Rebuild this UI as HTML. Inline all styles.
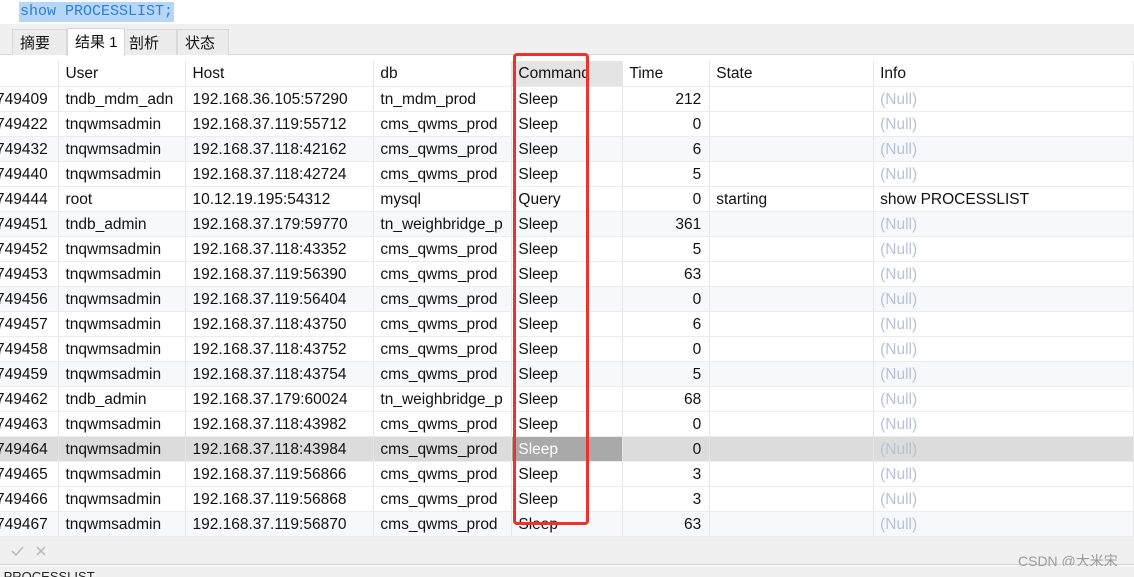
<!DOCTYPE html>
<html><head><meta charset="utf-8"><style>
*{margin:0;padding:0;box-sizing:border-box}
body{width:1134px;height:577px;overflow:hidden;background:#fff;font-family:"Liberation Sans","Noto Sans CJK SC",sans-serif;position:relative}
.sql{position:absolute;left:0;top:0;width:1134px;height:24px;background:#fff}
.sql span{position:absolute;left:19px;top:2px;height:20px;line-height:20px;background:#b6d6f5;color:#2b7fd4;font-family:"Liberation Mono",monospace;font-size:15px;padding:0 1px}
.gbar{position:absolute;left:0;top:24px;width:1134px;height:4px;background:#f0f0f0}
.tabs{position:absolute;left:0;top:28px;width:1134px;height:27px;background:#f0f0f0;border-bottom:1px solid #d8d8d8}
.tab{position:absolute;top:1px;height:26px;line-height:28px;font-size:15px;color:#111;border:1px solid #d8d8d8;border-bottom:none;background:#ececec;padding-left:7px}
.tab.act{background:#fff;top:0;height:28px}
table{position:absolute;left:0;top:61px;border-collapse:collapse;table-layout:fixed;font-size:15.5px;color:#111}
td{height:25px;border-right:1px solid #e6e6e6;border-bottom:1px solid #ececec;padding-left:6px;padding-top:2px;white-space:nowrap;overflow:hidden;line-height:22px}
tr.h td{background:#fff}
tr.o td{background:#f6f9fc}
tr.s td{background:#dcdcdc}
td.r{text-align:right;padding-right:8px}
td.n{color:#b8c2d6}
td.id{text-indent:-4px;padding-left:0}
.sel{background:#a9a9a9!important;color:#fff}
.bot{position:absolute;left:0;top:537px;width:1134px;height:28px;background:#f0f0f0;border-bottom:1px solid #cfcfcf}
.st{position:absolute;left:0;top:566px;width:1134px;height:11px;background:#f0f0f0;font-size:13px;line-height:22px;color:#222;overflow:hidden}
.redbox{position:absolute;left:513px;top:53px;width:76px;height:472px;border:3px solid #f0302a;border-radius:4px}
.wm{position:absolute;left:1018px;top:551px;font-size:14px;color:#9a9a9a}
</style></head><body>
<div class="sql"><span>show PROCESSLIST;</span></div>
<div class="gbar"></div>
<div class="tabs">
<div class="tab" style="left:12px;width:55px">摘要</div>
<div class="tab act" style="left:67px;width:58px">结果 1</div>
<div class="tab" style="left:124px;width:53px;padding-left:4px">剖析</div>
<div class="tab" style="left:177px;width:52px">状态</div>
</div>
<table>
<colgroup><col style="width:59px"><col style="width:127px"><col style="width:188px"><col style="width:138px"><col style="width:111px"><col style="width:87px"><col style="width:164px"><col style="width:260px"></colgroup>
<tr class="h"><td></td><td>User</td><td>Host</td><td>db</td><td style="background:#e4e4e4">Command</td><td>Time</td><td>State</td><td>Info</td></tr>
<tr><td class="id">749409</td><td>tndb_mdm_adn</td><td>192.168.36.105:57290</td><td>tn_mdm_prod</td><td>Sleep</td><td class="r">212</td><td></td><td class="n">(Null)</td></tr>
<tr><td class="id">749422</td><td>tnqwmsadmin</td><td>192.168.37.119:55712</td><td>cms_qwms_prod</td><td>Sleep</td><td class="r">0</td><td></td><td class="n">(Null)</td></tr>
<tr class="o"><td class="id">749432</td><td>tnqwmsadmin</td><td>192.168.37.118:42162</td><td>cms_qwms_prod</td><td>Sleep</td><td class="r">6</td><td></td><td class="n">(Null)</td></tr>
<tr><td class="id">749440</td><td>tnqwmsadmin</td><td>192.168.37.118:42724</td><td>cms_qwms_prod</td><td>Sleep</td><td class="r">5</td><td></td><td class="n">(Null)</td></tr>
<tr><td class="id">749444</td><td>root</td><td>10.12.19.195:54312</td><td>mysql</td><td>Query</td><td class="r">0</td><td>starting</td><td>show PROCESSLIST</td></tr>
<tr class="o"><td class="id">749451</td><td>tndb_admin</td><td>192.168.37.179:59770</td><td>tn_weighbridge_p</td><td>Sleep</td><td class="r">361</td><td></td><td class="n">(Null)</td></tr>
<tr><td class="id">749452</td><td>tnqwmsadmin</td><td>192.168.37.118:43352</td><td>cms_qwms_prod</td><td>Sleep</td><td class="r">5</td><td></td><td class="n">(Null)</td></tr>
<tr><td class="id">749453</td><td>tnqwmsadmin</td><td>192.168.37.119:56390</td><td>cms_qwms_prod</td><td>Sleep</td><td class="r">63</td><td></td><td class="n">(Null)</td></tr>
<tr class="o"><td class="id">749456</td><td>tnqwmsadmin</td><td>192.168.37.119:56404</td><td>cms_qwms_prod</td><td>Sleep</td><td class="r">0</td><td></td><td class="n">(Null)</td></tr>
<tr><td class="id">749457</td><td>tnqwmsadmin</td><td>192.168.37.118:43750</td><td>cms_qwms_prod</td><td>Sleep</td><td class="r">6</td><td></td><td class="n">(Null)</td></tr>
<tr><td class="id">749458</td><td>tnqwmsadmin</td><td>192.168.37.118:43752</td><td>cms_qwms_prod</td><td>Sleep</td><td class="r">0</td><td></td><td class="n">(Null)</td></tr>
<tr class="o"><td class="id">749459</td><td>tnqwmsadmin</td><td>192.168.37.118:43754</td><td>cms_qwms_prod</td><td>Sleep</td><td class="r">5</td><td></td><td class="n">(Null)</td></tr>
<tr><td class="id">749462</td><td>tndb_admin</td><td>192.168.37.179:60024</td><td>tn_weighbridge_p</td><td>Sleep</td><td class="r">68</td><td></td><td class="n">(Null)</td></tr>
<tr><td class="id">749463</td><td>tnqwmsadmin</td><td>192.168.37.118:43982</td><td>cms_qwms_prod</td><td>Sleep</td><td class="r">0</td><td></td><td class="n">(Null)</td></tr>
<tr class="s"><td class="id">749464</td><td>tnqwmsadmin</td><td>192.168.37.118:43984</td><td>cms_qwms_prod</td><td class="sel">Sleep</td><td class="r">0</td><td></td><td class="n">(Null)</td></tr>
<tr><td class="id">749465</td><td>tnqwmsadmin</td><td>192.168.37.119:56866</td><td>cms_qwms_prod</td><td>Sleep</td><td class="r">3</td><td></td><td class="n">(Null)</td></tr>
<tr><td class="id">749466</td><td>tnqwmsadmin</td><td>192.168.37.119:56868</td><td>cms_qwms_prod</td><td>Sleep</td><td class="r">3</td><td></td><td class="n">(Null)</td></tr>
<tr class="o"><td class="id">749467</td><td>tnqwmsadmin</td><td>192.168.37.119:56870</td><td>cms_qwms_prod</td><td>Sleep</td><td class="r">63</td><td></td><td class="n">(Null)</td></tr>
</table>
<div class="redbox"></div>
<div class="bot">
<svg style="position:absolute;left:10px;top:8px" width="36" height="12"><path d="M2 6l4 4 7-8" stroke="#bdbdbd" stroke-width="1.6" fill="none"/><path d="M27 2l8 8M35 2l-8 8" stroke="#bdbdbd" stroke-width="1.6"/></svg>
</div>
<div class="wm">CSDN @大米宋</div>
<div class="st">&nbsp;PROCESSLIST</div>
</body></html>
